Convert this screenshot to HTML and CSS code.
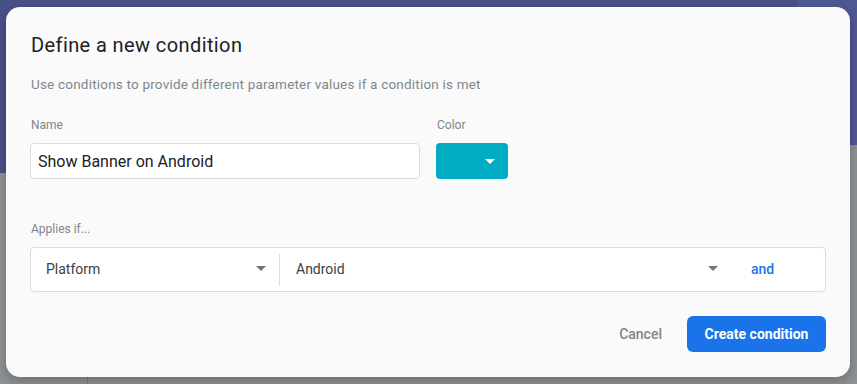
FILE: index.html
```html
<!DOCTYPE html>
<html lang="en">
<head>
    <meta charset="UTF-8">
    <meta name="viewport" content="width=device-width, initial-scale=1.0">
    <title>Define a new condition</title>
    <link rel="stylesheet" href="styles.css">
</head>
<body>
    <div class="page">
        <div class="hero">
            <div class="hero-main"></div>
            <div class="hero-side"></div>
        </div>
        <div class="content">
            <div class="sidebar"></div>
            <div class="main"></div>
        </div>
    </div>

    <div class="dialog">
        <h2 class="dialog-title">Define a new condition</h2>
        <p class="dialog-desc">Use conditions to provide different parameter values if a condition is met</p>

        <div class="field-row">
            <div class="field name-field">
                <label class="field-label" for="name">Name</label>
                <input class="text-input" type="text" id="name" value="Show Banner on Android">
            </div>
            <div class="field">
                <span class="field-label">Color</span>
                <button class="color-btn" type="button">
                    <span class="caret caret-white"></span>
                </button>
            </div>
        </div>

        <div class="field-label applies">Applies if...</div>
        <div class="rule">
            <div class="rule-cell rule-key">
                <span>Platform</span>
                <span class="caret"></span>
            </div>
            <div class="rule-divider"></div>
            <div class="rule-cell rule-value">
                <span>Android</span>
                <span class="caret"></span>
            </div>
            <div class="rule-and">and</div>
        </div>

        <div class="actions">
            <button class="btn btn-text" type="button">Cancel</button>
            <button class="btn btn-primary" type="button">Create condition</button>
        </div>
    </div>
</body>
</html>
```

FILE: styles.css
```css
* {
    box-sizing: border-box;
}

body {
    margin: 0;
    font-family: Roboto, "Liberation Sans", sans-serif;
    background-color: #8f9295;
    overflow: hidden;
}

.page {
    height: 384px;
    display: flex;
    flex-direction: column;
}

.hero {
    height: 173px;
    display: flex;
}

.hero-main {
    flex: 1;
    background-color: #485088;
}

.hero-side {
    width: 60px;
    background: linear-gradient(#4f5893 0, #4f5893 145px, #8f9295 145px);
}

.content {
    flex: 1;
    display: flex;
}

.sidebar {
    width: 88px;
    border-right: 1px solid #7d8083;
}

.main {
    flex: 1;
}

.dialog {
    position: absolute;
    left: 6px;
    top: 7px;
    width: 844px;
    height: 370px;
    padding: 26px 24px 0 24px;
    background-color: #fafafa;
    border-radius: 14px;
    box-shadow: 0 4px 12px rgba(0, 0, 0, 0.25);
}

.dialog-title {
    margin: 0 0 0 1px;
    font-size: 20px;
    line-height: 24px;
    font-weight: 400;
    letter-spacing: 0.4px;
    color: #202124;
}

.dialog-desc {
    margin: 18px 0 0 1px;
    font-size: 13.5px;
    line-height: 18px;
    letter-spacing: 0.2px;
    color: #80868b;
}

.field-row {
    display: flex;
    gap: 16px;
    margin-top: 24px;
}

.field {
    display: flex;
    flex-direction: column;
}

.name-field {
    width: 390px;
}

.field-label {
    display: block;
    font-size: 12px;
    line-height: 16px;
    color: #80868b;
    margin: 0 0 10px 1px;
}

.text-input {
    height: 36px;
    padding: 0 7px;
    border: 1px solid #dadce0;
    border-radius: 4px;
    background-color: white;
    font-family: inherit;
    font-size: 16px;
    color: #202124;
    outline: none;
}

.color-btn {
    width: 72px;
    height: 36px;
    border: none;
    border-radius: 4px;
    background-color: #00acc1;
    display: flex;
    justify-content: flex-end;
    align-items: center;
    padding: 0 13px 0 0;
    cursor: pointer;
}

.caret {
    width: 0;
    height: 0;
    border-left: 5px solid transparent;
    border-right: 5px solid transparent;
    border-top: 5px solid #757575;
}

.caret-white {
    border-top-color: white;
}

.applies {
    margin-top: 42px;
}

.rule {
    display: flex;
    align-items: center;
    height: 45px;
    border: 1px solid #dadce0;
    border-radius: 4px;
    background-color: white;
    font-size: 14px;
    color: #3c4043;
}

.rule-cell {
    display: flex;
    align-items: center;
    justify-content: space-between;
    height: 100%;
    padding-bottom: 2px;
}

.rule-key {
    width: 248px;
    padding-left: 15px;
    padding-right: 13px;
}

.rule-divider {
    width: 1px;
    height: 32px;
    background-color: #e0e0e0;
}

.rule-value {
    width: 450px;
    padding-left: 16px;
    padding-right: 12px;
}

.rule-and {
    padding-left: 21px;
    padding-bottom: 2px;
    font-weight: 500;
    color: #1a73e8;
}

.actions {
    display: flex;
    justify-content: flex-end;
    align-items: center;
    gap: 9px;
    margin-top: 24px;
}

.btn {
    height: 36px;
    border: none;
    border-radius: 6px;
    font-family: inherit;
    font-size: 14px;
    font-weight: 500;
    cursor: pointer;
}

.btn-text {
    padding: 0 16px;
    background: none;
    color: #80868b;
}

.btn-primary {
    width: 139px;
    padding: 0 16px;
    background-color: #1a73e8;
    color: white;
    font-weight: 700;
}
```
